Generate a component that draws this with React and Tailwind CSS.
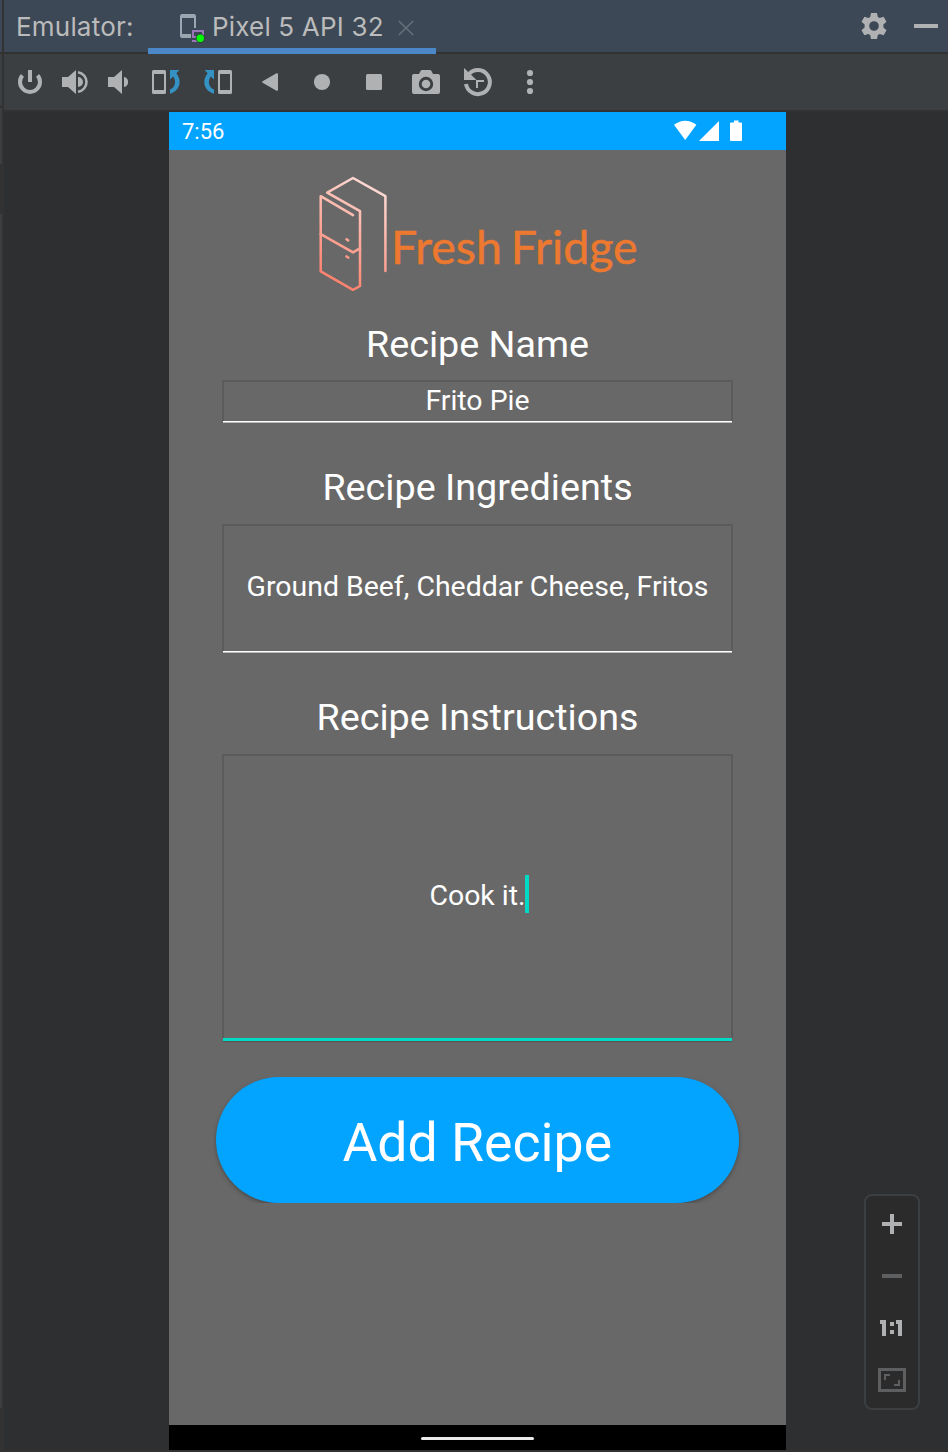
import React from "react";

function Icon({ box, className = "", children }) {
  return (
    <svg viewBox={box} className={`block shrink-0 ${className}`} fill="#afb1b3" xmlns="http://www.w3.org/2000/svg">
      {children}
    </svg>
  );
}

function ToolWindowHeader() {
  return (
    <header className="flex h-[54px] shrink-0 items-start border-b-2 border-[#323232] bg-[#3d4856] font-['Inter',sans-serif] text-[26px] text-[#bbbbbb]">
      <span className="w-[144px] pl-3 leading-[54px] tracking-[0.2px] whitespace-nowrap">Emulator:</span>
      <div className="flex h-[54px] w-[288px] items-start border-b-[6px] border-[#4a88c7]">
        <Icon box="176 12 32 32" className="mt-3 ml-7 h-8 w-8">
          <path d="M182 14h12a2 2 0 0 1 2 2v12h-2V18h-12v16h9v4h-9a2 2 0 0 1-2-2V16a2 2 0 0 1 2-2z" fill="#9aa7b0" />
          <path d="M192 30h12v8h-12zm2 2v4h8v-4zM192 40h6v2h-6z" fill="#9876b8" fillRule="evenodd" />
          <circle cx="200.3" cy="38.3" r="4.7" fill="#30483d" />
          <circle cx="200.3" cy="38.3" r="3.7" fill="#00ff00" />
        </Icon>
        <span className="ml-1 w-[176px] leading-[54px] tracking-[0.18px] whitespace-nowrap">Pixel 5 API 32</span>
        <Icon box="394 16 24 24" className="mt-4 ml-1.5 h-6 w-6">
          <path d="M398.8 21 413.2 35M413.2 21 398.8 35" stroke="#66717c" strokeWidth="1.5" />
        </Icon>
      </div>
      <div className="flex flex-1 items-start justify-end pt-2.5 pr-2">
        <Icon box="858 10 32 32" className="mr-[22px] h-8 w-8">
          <path
            fillRule="evenodd"
            d="M871 13h6l.8 4 1.9 1.1 3.9-1.4 2.9 5-3.1 2.7v3.2l3.1 2.7-2.9 5-3.9-1.4-1.9 1.1-.8 4h-6l-.8-4-1.9-1.1-3.900 1.400-2.900-5 3.100-2.700v-3.200l-3.100-2.700 2.900-5 3.900 1.400 1.900-1.100zm3 8.200a4.800 4.800 0 1 0 0 9.600a4.800 4.800 0 0 0 0-9.600z"
          />
        </Icon>
        <Icon box="912 10 28 32" className="h-8 w-7">
          <path d="M914 24h24v4h-24z" />
        </Icon>
      </div>
    </header>
  );
}

function Toolbar() {
  return (
    <div className="flex h-[58px] shrink-0 items-start border-b-2 border-[#323232] bg-[#3c3f41] pt-3 pl-1">
      <Icon box="8 66 44 32" className="h-8 w-11">
        <path d="M28 70h4v12h-4z" />
        <path d="M22.400 75.400A10 10 0 1 0 37.600 75.400" fill="none" stroke="#afb1b3" strokeWidth="4" />
      </Icon>
      <Icon box="52 66 44 32" className="h-8 w-11">
        <path d="M62 77h6l8-7v24l-8-7h-6zM78 77a5 5 0 0 1 0 10z" />
        <path d="M78 72.200a9.900 9.900 0 0 1 0 19.600" fill="none" stroke="#afb1b3" strokeWidth="2.600" />
      </Icon>
      <Icon box="96 66 44 32" className="h-8 w-11">
        <path d="M108 77h6l8-7v24l-8-7h-6zM124 77a5.100 5.100 0 0 1 0 10z" />
      </Icon>
      <Icon box="140 66 52 32" className="h-8 w-13">
        <path fillRule="evenodd" d="M153.500 70h11a1.500 1.500 0 0 1 1.500 1.500v21a1.500 1.500 0 0 1-1.500 1.500h-11a1.500 1.500 0 0 1-1.500-1.500v-21a1.500 1.500 0 0 1 1.500-1.500zM154 74v16h10V74z" />
        <path d="M170 70h9.500l-3.200 3.300c5 5.800 5.500 16.700-6.300 20.500v-4.200c5.700-2.600 6.400-9 3.200-13.200L170 79.500z" fill="#3592c4" />
      </Icon>
      <Icon box="192 66 52 32" className="h-8 w-13">
        <path fillRule="evenodd" d="M219.500 70h11a1.500 1.500 0 0 1 1.500 1.500v21a1.500 1.500 0 0 1-1.500 1.500h-11a1.500 1.500 0 0 1-1.500-1.500v-21a1.500 1.500 0 0 1 1.500-1.500zM220 74v16h10V74z" />
        <path d="M214 70h-9.500l3.200 3.300c-5 5.800-5.500 16.700 6.300 20.500v-4.200c-5.700-2.600-6.400-9-3.200-13.200L214 79.500z" fill="#3592c4" />
      </Icon>
      <Icon box="244 66 52 32" className="h-8 w-13">
        <path d="M262.600 81.200 276.500 73.300q1.500-.6 1.500 1v15.400q0 1.600-1.500 1l-13.900-7.900q-1.200-.8 0-1.600z" />
      </Icon>
      <Icon box="296 66 52 32" className="h-8 w-13">
        <circle cx="322" cy="82" r="8.100" />
      </Icon>
      <Icon box="348 66 52 32" className="h-8 w-13">
        <rect x="366" y="74" width="16" height="16" rx="1.500" />
      </Icon>
      <Icon box="400 66 52 32" className="h-8 w-13">
        <path
          fillRule="evenodd"
          d="M414 74h5l1.500-3q.5-1 1.500-1h8q1 0 1.500 1l1.500 3h5q2 0 2 2v16q0 2-2 2h-24q-2 0-2-2V76q0-2 2-2zm12 2.800a7.200 7.200 0 1 0 0 14.400a7.200 7.200 0 0 0 0-14.400z"
        />
        <circle cx="426" cy="84" r="4.300" />
      </Icon>
      <Icon box="452 66 52 32" className="h-8 w-13">
        <path d="M468.800 74.200A12 12 0 1 1 466 84" fill="none" stroke="#afb1b3" strokeWidth="4" />
        <path d="M464 68v12h12.500zM476 80h8v2h-6v6h-2z" />
      </Icon>
      <Icon box="504 66 52 32" className="h-8 w-13">
        <circle cx="530" cy="73" r="3.100" />
        <circle cx="530" cy="82" r="3.100" />
        <circle cx="530" cy="91" r="3.100" />
      </Icon>
    </div>
  );
}

function StatusBar() {
  return (
    <div className="flex h-[38px] shrink-0 items-center justify-between bg-[#02a4ff] pr-[43px] pl-[13px] text-[22px] text-white">
      <span>7:56</span>
      <svg viewBox="674 120 69 22" className="h-[22px] w-[69px]" fill="#fff">
        <path d="M674 124.800q11.200-8 22.400 0L685.200 140z" />
        <path d="M719 121v20h-20z" />
        <path d="M734 120.500h4.500v2H741q1 0 1 1V140q0 1-1 1h-10q-1 0-1-1v-16.500q0-1 1-1h3z" />
      </svg>
    </div>
  );
}

function Logo() {
  return (
    <div className="flex h-[116px] w-full pl-[148px]">
      <svg viewBox="317 176 72 116" className="h-[116px] w-[72px] shrink-0" fill="none">
        <defs>
          <linearGradient id="fridge" gradientUnits="userSpaceOnUse" x1="330" y1="285" x2="385" y2="190">
            <stop offset="0" stopColor="#ff7d68" />
            <stop offset="1" stopColor="#fddcd6" />
          </linearGradient>
        </defs>
        <g stroke="url(#fridge)" strokeWidth="2.500" strokeLinecap="round" strokeLinejoin="round">
          <path d="M385.400 271V196.200L353 178 327.200 192.700 360 211.200V286L353 289.800 320.700 271.300V196.200L353 215.200" />
          <path d="M320.700 234.200 353 252.400 360 248.300M346.500 239.200l1.700 1.200M346.500 256.400l1.700 1.200" />
        </g>
      </svg>
      <span className="mt-10 ml-0.5 font-['Lato',sans-serif] text-[46.500px] leading-[60px] [word-spacing:-3px] whitespace-nowrap text-[#ed782f] [-webkit-text-stroke:0.5px_#ed782f]">
        Fresh Fridge
      </span>
    </div>
  );
}

function Field({ label, value, labelClass = "h-[59px]", boxClass, active = false }) {
  return (
    <div className="flex w-[511px] flex-col">
      <label className={`text-center text-[37.700px] leading-[44px] whitespace-nowrap ${labelClass}`}>{label}</label>
      <div
        className={`flex w-full items-center justify-center border-2 border-b-0 border-[#5b5b5b] text-[28.450px] leading-[38px] whitespace-nowrap ${boxClass}`}
      >
        <span className={active ? "pt-[3px]" : ""}>{value}</span>
        {active && <span className="-mr-[3px] -ml-px h-[38px] w-1 bg-[#03dac5]" />}
      </div>
      <div
        className={
          active ? "mx-px h-[3px] bg-[#03dac5] shadow-[0_1px_1px_#555]" : "mx-px h-0.5 border-t border-white bg-[#bcbcbc]"
        }
      />
    </div>
  );
}

function Phone() {
  return (
    <main className="flex w-[617px] shrink-0 flex-col font-['Roboto',sans-serif] text-white">
      <StatusBar />
      <div className="flex flex-1 flex-col items-center bg-[#686868] pt-[26px]">
        <Logo />
        <div className="flex flex-col items-center pt-[30px]">
          <Field label="Recipe Name" value="Frito Pie" labelClass="h-[58px]" boxClass="h-[41px] pb-0.5" />
          <div className="h-[42px]" />
          <Field label="Recipe Ingredients" value="Ground Beef, Cheddar Cheese, Fritos" boxClass="h-[127px] pb-1" />
          <div className="h-[42px]" />
          <Field label="Recipe Instructions" value="Cook it." boxClass="h-[284px] pb-1.5" active />
        </div>
        <div className="mt-9 h-[126px] w-[530px] overflow-hidden pr-1 pl-[3.500px]">
          <button className="block h-[126px] w-full rounded-full bg-[#02a4ff] pt-1.5 text-[53.600px] leading-[120px] shadow-[0_2px_4px_#4a4a4a]">
            Add Recipe
          </button>
        </div>
      </div>
      <div className="flex h-[25px] shrink-0 items-center justify-center bg-black pt-0.5">
        <div className="h-[3px] w-[113px] rounded-sm bg-[#eaeaea]" />
      </div>
    </main>
  );
}

function ZoomControls() {
  return (
    <aside className="mt-[1082px] ml-[78px] h-[216px] w-14 rounded-lg border-2 border-[#3c3f41] bg-[#2b2b2b]">
      <Icon box="866 1196 52 212" className="h-[212px] w-[52px]">
        <path d="M890 1214h4v8h8v4h-8v8h-4v-8h-8v-4h8z" />
        <path d="M882 1274h20v4h-20z" fill="#5e5f60" />
        <path d="M880 1320h6v16h-4v-12h-2zM890 1322h4v4h-4zM890 1330h4v4h-4zM896 1320h6v16h-4v-12h-2z" />
        <path
          fillRule="evenodd"
          fill="#5e5f60"
          d="M878 1368h28v24h-28zm3 3v18h22v-18zM884 1374h6v2h-4v4h-2zM898 1380h2v6h-6v-2h4z"
        />
      </Icon>
    </aside>
  );
}

export default function App() {
  return (
    <div className="flex h-[1452px] w-[948px] overflow-hidden bg-[#323232]">
      <div className="flex w-1 shrink-0 flex-col border-r-2 border-[#323232]">
        <div className="h-[52px] bg-[#3d4856]" />
        <div className="mt-0.5 h-[52px] bg-[#3c3f41]" />
        <div className="mt-0.5 h-14 bg-[#3c3f41]" />
        <div className="mt-[50px] h-[1194px] bg-[#3c3f41]" />
      </div>
      <div className="flex min-w-0 flex-1 flex-col">
        <ToolWindowHeader />
        <Toolbar />
        <div className="flex h-[1338px] bg-[#2e2f31] pl-[165px]">
          <Phone />
          <ZoomControls />
        </div>
      </div>
    </div>
  );
}
